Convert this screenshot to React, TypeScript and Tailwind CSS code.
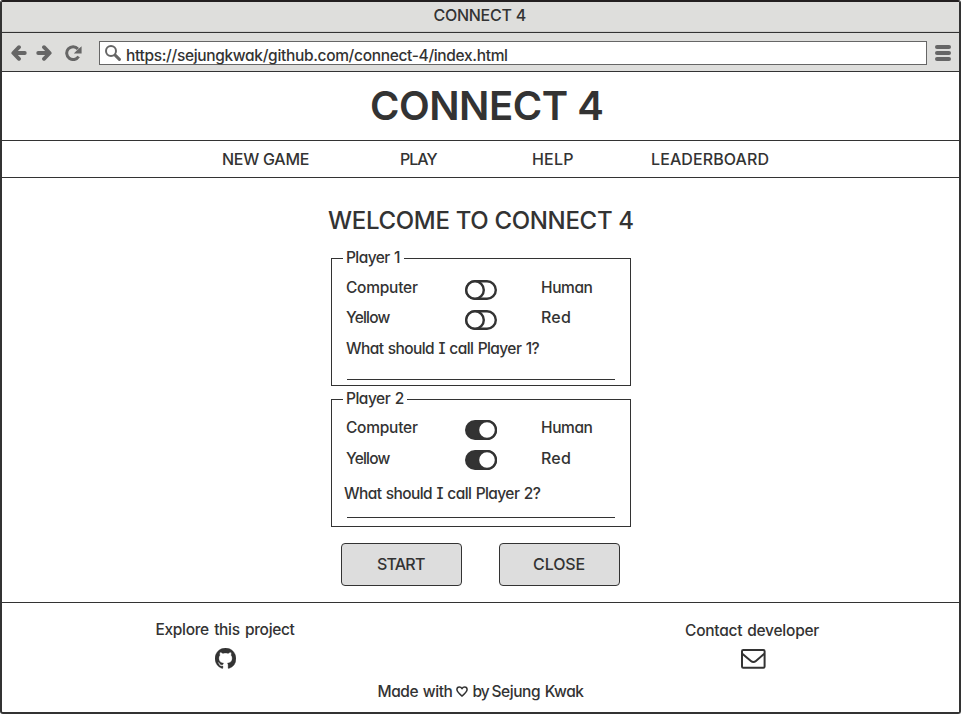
import type { ReactNode } from "react";

function GithubIcon() {
  return (
    <svg viewBox="0 0 16 16" className="size-[21px]" fill="#333" stroke="#333" strokeWidth="0.25">
      <path d="M8 0C3.58 0 0 3.58 0 8c0 3.54 2.29 6.53 5.47 7.59.4.07.55-.17.55-.38 0-.19-.01-.82-.01-1.49-2.01.37-2.53-.49-2.69-.94-.09-.23-.48-.94-.82-1.13-.28-.15-.68-.52-.01-.53.63-.01 1.08.58 1.23.82.72 1.21 1.87.87 2.33.66.07-.52.28-.87.51-1.07-1.78-.2-3.64-.89-3.64-3.95 0-.87.31-1.59.82-2.15-.08-.2-.36-1.02.08-2.12 0 0 .67-.21 2.2.82.64-.18 1.32-.27 2-.27.68 0 1.36.09 2 .27 1.53-1.04 2.2-.82 2.2-.82.44 1.1.16 1.92.08 2.12.51.56.82 1.27.82 2.15 0 3.07-1.87 3.75-3.65 3.95.29.25.54.73.54 1.48 0 1.07-.01 1.93-.01 2.2 0 .21.15.46.55.38A8.013 8.013 0 0 0 16 8c0-4.42-3.58-8-8-8z" />
    </svg>
  );
}

function ArrowIcon({ flip = false }: { flip?: boolean }) {
  return (
    <svg viewBox="0 0 16 16" className={flip ? "size-4 -scale-x-100" : "size-4"} fill="none" stroke="#666" strokeWidth="3.8" strokeLinecap="round" strokeLinejoin="round">
      <path d="M8 2.2 2.3 8 8 13.8M3 8h10.8" />
    </svg>
  );
}

function ReloadIcon() {
  return (
    <svg viewBox="0 0 17 16" className="h-4 w-[17px]" fill="none">
      <path d="M13.6 11.4A6.4 6.4 0 1 1 12.9 3.9" stroke="#666" strokeWidth="3" />
      <path d="M16.6 1.2V8.6H8.8L11.5 5.8 14 3.6z" fill="#666" />
    </svg>
  );
}

function SearchIcon() {
  return (
    <svg viewBox="0 0 16 16" className="size-4 shrink-0" fill="none" stroke="#666">
      <circle cx="6" cy="6" r="5" strokeWidth="2" />
      <path d="m10.4 10.4 4 4" strokeWidth="3" strokeLinecap="round" />
    </svg>
  );
}

function MailIcon() {
  return (
    <svg viewBox="0 0 25 20" className="h-5 w-[25px]" fill="none" stroke="#333" strokeWidth="2" strokeLinejoin="round">
      <rect x="1" y="1" width="22.6" height="17.8" rx="1.2" />
      <path d="M1.3 4.8 9.9 12c1.8 1.5 3.2 1.5 5 0l8.4-7.2" />
    </svg>
  );
}

function HeartIcon() {
  return (
    <svg viewBox="0 0 12 11" className="h-[11px] w-3" fill="none" stroke="#333" strokeWidth="1.5" strokeLinejoin="round">
      <path d="M6 10.1C3.3 7.9.9 5.9.9 3.6.9 2 2 .9 3.4.9 4.6.9 5.5 1.6 6 2.7 6.5 1.6 7.4.9 8.6.9 10 .9 11.1 2 11.1 3.6 11.1 5.9 8.7 7.9 6 10.1Z" />
    </svg>
  );
}

function Toggle({ on }: { on: boolean }) {
  return (
    <svg viewBox="0 0 32 20" className="h-5 w-8" stroke="#333" strokeWidth="2.4">
      <rect x="1.2" y="1.2" width="29.6" height="17.6" rx="8.8" fill={on ? "#333" : "#fff"} />
      <circle cx={on ? 22 : 10} cy="10" r={on ? 9 : 8.8} fill="#fff" />
    </svg>
  );
}

function Row({ left, right, on, className, leftClass, rightClass }: { left: string; right: string; on: boolean; className: string; leftClass: string; rightClass: string }) {
  return (
    <div className={`grid h-5 grid-cols-[119px_76px_1fr] pl-[14px] leading-[22px] ${className}`}>
      <span className={leftClass}>{left}</span>
      <Toggle on={on} />
      <span className={rightClass}>{right}</span>
    </div>
  );
}

function Panel({ title, className, legendClass, children }: { title: string; className: string; legendClass: string; children: ReactNode }) {
  return (
    <section className={`flex w-[300px] flex-col border border-[#333] text-[15.5px] ${className}`}>
      <h3 className={`-mt-[12px] ml-[11px] h-5 bg-white pl-[3px] leading-[22px] whitespace-nowrap [word-spacing:1px] ${legendClass}`}>{title}</h3>
      {children}
    </section>
  );
}

export default function App() {
  return (
    <div className="flex h-[714px] w-[961px] flex-col overflow-hidden rounded-[3px] border-2 border-[#333] border-t-[#231f20] bg-white font-['Inter','Liberation_Sans',sans-serif] text-base font-medium text-[#333] [font-feature-settings:'cv11']">
      <div className="flex h-[31px] shrink-0 border-b border-[#333] bg-[#dededc] pl-[431.5px] leading-[27px] tracking-[-0.27px] shadow-[inset_0_-1px_0_#cfcfcd]">CONNECT 4</div>
      <div className="flex h-[39px] shrink-0 items-start border-b border-[#333] bg-[#dededc] pt-2 pl-[9px]">
        <div className="flex pt-1">
          <ArrowIcon />
          <div className="w-[9px]" />
          <ArrowIcon flip />
          <div className="w-[13px]" />
          <ReloadIcon />
        </div>
        <div className="ml-[17px] flex h-6 w-[828px] border border-[#666] bg-white pt-[3px] pl-[5px]">
          <SearchIcon />
          <span className="ml-[5px] text-[15.5px] leading-[22px] tracking-[-0.33px]">https://sejungkwak/github.com/connect-4/index.html</span>
        </div>
        <div className="ml-2 flex w-4 flex-col gap-0.5 pt-1">
          <i className="h-1 rounded-full bg-[#666]" />
          <i className="h-1 rounded-full bg-[#666]" />
          <i className="h-1 rounded-full bg-[#666]" />
        </div>
      </div>
      <header className="h-[69px] shrink-0 border-b border-[#333] pl-[368px]">
        <h1 className="text-[40px] leading-[67px] font-semibold tracking-[-0.5px]">CONNECT 4</h1>
      </header>
      <nav className="grid h-[37px] shrink-0 grid-cols-[178px_132px_119px_1fr] border-b border-[#333] pl-[220px] leading-[36px]">
        <a className="tracking-[-0.25px]">NEW GAME</a>
        <a className="tracking-[-1px]">PLAY</a>
        <a className="tracking-[0.2px]">HELP</a>
        <a className="tracking-[0.1px]">LEADERBOARD</a>
      </nav>
      <main className="flex h-[425px] shrink-0 flex-col border-b border-[#333]">
        <h2 className="mt-[27px] h-8 pl-[326px] text-2xl leading-8 tracking-[-0.32px]">WELCOME TO CONNECT 4</h2>
        <Panel title="Player 1" className="mt-[21px] ml-[329px] h-[128px]" legendClass="w-[61px] tracking-[-0.6px]">
          <Row left="Computer" right="Human" on={false} className="mt-[13px]" leftClass="-mt-[3px] tracking-[-0.25px]" rightClass="-mt-[3px] tracking-[-0.4px]" />
          <Row left="Yellow" right="Red" on={false} className="mt-[10px]" leftClass="-mt-[3px] tracking-[-0.8px]" rightClass="-mt-[3px] text-base leading-5 tracking-[0.2px]" />
          <p className="mt-[8px] ml-[14px] h-5 leading-[22px] tracking-[-0.58px] [font-feature-settings:'cv11','cv08'] [word-spacing:0.8px]">What should I call Player 1?</p>
          <div className="mt-[21px] ml-[15px] h-px w-[268px] bg-[#333]" />
        </Panel>
        <Panel title="Player 2" className="mt-[13px] ml-[329px] h-[128px]" legendClass="w-[64px] tracking-[-0.5px]">
          <Row left="Computer" right="Human" on className="mt-[12px]" leftClass="-mt-[3px] tracking-[-0.25px]" rightClass="-mt-[3px] tracking-[-0.4px]" />
          <Row left="Yellow" right="Red" on className="mt-[10px]" leftClass="-mt-[2px] tracking-[-0.8px]" rightClass="-mt-[2px] text-base leading-5 tracking-[0.2px]" />
          <p className="mt-[13px] ml-[12px] h-5 leading-[22px] tracking-[-0.58px] [font-feature-settings:'cv11','cv08'] [word-spacing:0.8px]">What should I call Player 2?</p>
          <div className="mt-[14px] ml-[15px] h-px w-[268px] bg-[#333]" />
        </Panel>
        <div className="mt-4 ml-[339px] flex gap-[37px]">
          <button className="h-[43px] w-[121px] rounded border border-[#333] bg-[#ddd] pb-0.5 pl-[35px] text-left tracking-[-0.8px]">START</button>
          <button className="h-[43px] w-[121px] rounded border border-[#333] bg-[#ddd] pb-0.5 pl-[33px] text-left tracking-[-0.1px]">CLOSE</button>
        </div>
      </main>
      <footer className="grid grid-cols-[528px_1fr] pl-[153.5px] text-[15.5px] leading-[22px]">
        <div>
          <p className="mt-4 h-5 tracking-[-0.33px] [word-spacing:1.5px]">Explore this project</p>
          <div className="mt-[9px] ml-[59.5px]"><GithubIcon /></div>
        </div>
        <div>
          <p className="mt-[17px] ml-[1.5px] h-5 tracking-[-0.24px] [word-spacing:1px]">Contact developer</p>
          <div className="mt-[9px] ml-[57px]"><MailIcon /></div>
        </div>
        <p className="col-span-2 mt-[12px] flex h-5 pl-[222px] tracking-[-0.45px] [word-spacing:1px]">
          <span className="w-[78px]">Made with</span>
          <span className="w-[17px] pt-[5px]"><HeartIcon /></span>
          <span className="w-[19px] tracking-[-1px]">by</span>
          <span>Sejung Kwak</span>
        </p>
      </footer>
    </div>
  );
}
